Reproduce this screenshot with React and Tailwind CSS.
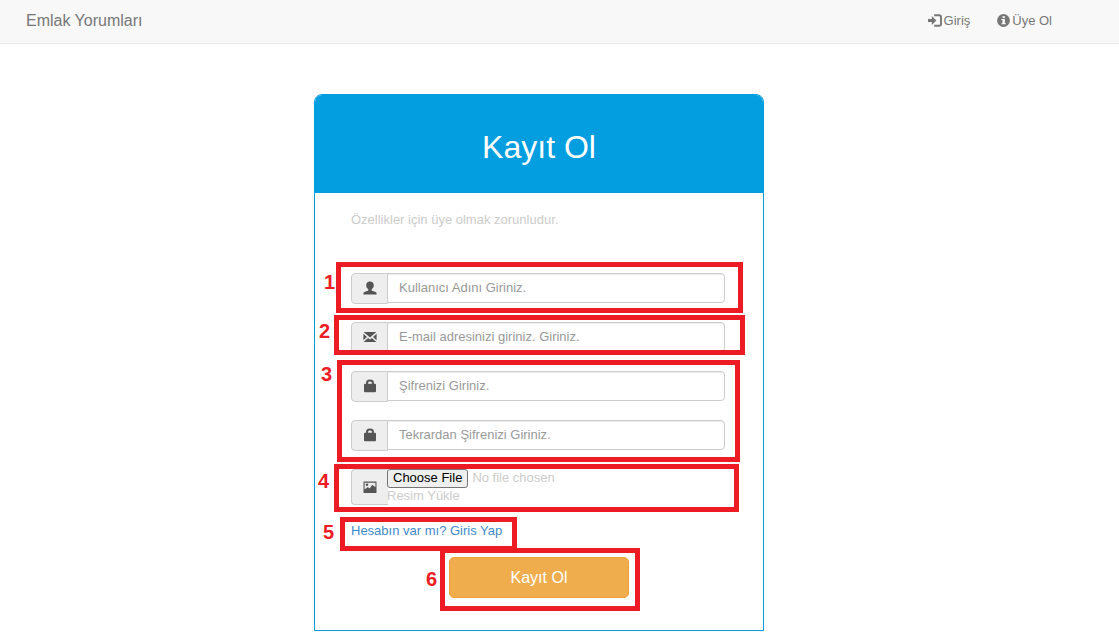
import React from "react";

function LoginIcon() {
  return (
    <svg viewBox="0 0 14 13" className="h-[13px] w-3.5 shrink-0" aria-hidden="true">
      <path d="M0 4.9H3.8V2L8.4 6.5L3.8 11V8.1H0Z" fill="currentColor" />
      <path d="M6.2 1.2H11C12.4 1.2 13 1.8 13 3V10C13 11.2 12.4 11.8 11 11.8H6.2" fill="none" stroke="currentColor" strokeWidth="1.9" />
    </svg>
  );
}

function InfoIcon() {
  return (
    <svg viewBox="0 0 13 13" className="h-[13px] w-[13px] shrink-0" aria-hidden="true">
      <circle cx="6.5" cy="6.5" r="6.4" fill="currentColor" />
      <path d="M5.5 2.2H7.9V4H5.5ZM4.4 5H7.9V9.2H8.8V10.3H4.4V9.2H5.4V6.1H4.4Z" fill="#f8f8f8" />
    </svg>
  );
}

function UserIcon() {
  return (
    <svg viewBox="0 0 14 14" className="h-3.5 w-3.5" fill="currentColor" aria-hidden="true">
      <path d="M7 .4C9.4 .4 10.8 2 10.8 4.2C10.8 6 9.8 7.4 8.7 8.3V9.2C8.7 9.7 9.3 9.9 10.6 10.3C12.8 11 13.6 11.6 13.6 12.6V13.4H.4V12.6C.4 11.6 1.2 11 3.4 10.3C4.7 9.9 5.3 9.7 5.3 9.2V8.3C4.2 7.4 3.2 6 3.2 4.2C3.2 2 4.6 .4 7 .4Z" />
    </svg>
  );
}

function MailIcon() {
  return (
    <svg viewBox="0 0 14 14" className="h-3.5 w-3.5" fill="currentColor" aria-hidden="true">
      <path d="M.6 2H13.4L7 7.6ZM.4 3.7L4 6.9L.4 10.2ZM13.6 3.7V10.2L10 6.9ZM5.1 7.9L7 9.6L8.9 7.9L13.4 12H.6Z" />
    </svg>
  );
}

function LockIcon() {
  return (
    <svg viewBox="0 0 14 14" className="h-3.5 w-3.5" aria-hidden="true">
      <path d="M4.1 6V3.8C4.1 2.3 5 1.6 7 1.6S9.9 2.3 9.9 3.8V6" fill="none" stroke="currentColor" strokeWidth="2" />
      <rect x="1" y="4.7" width="12" height="8.6" rx="1" fill="currentColor" />
    </svg>
  );
}

function PictureIcon() {
  return (
    <svg viewBox="0 0 14 14" className="h-3.5 w-3.5" aria-hidden="true">
      <rect x=".5" y="1.5" width="13" height="11.5" rx=".5" fill="currentColor" />
      <path d="M1.6 2.7H12.4V7.2L9.4 4.8L6.6 8.6L4.8 7L1.6 9.6Z" fill="#eee" />
      <circle cx="4" cy="4.8" r="1.3" fill="currentColor" />
    </svg>
  );
}

const addon =
  "flex w-[37px] shrink-0 items-center justify-center rounded-l border border-[#ccc] bg-[#eee] text-[#555]";

function Field({ id, label, type, icon }) {
  return (
    <div className="flex items-start">
      <label htmlFor={id} aria-label={label} className={`${addon} h-[31px] pb-0.5`}>
        {icon}
      </label>
      <input
        id={id}
        type={type}
        placeholder={label}
        className="-ml-px h-[30px] min-w-0 flex-1 rounded-r border border-[#ccc] bg-white px-[11px] pb-0.5 text-[13px] text-[#555] shadow-[inset_0_1px_1px_rgba(0,0,0,0.075)] outline-none placeholder:text-[#999]"
      />
    </div>
  );
}

function Marker({ number, numberPlace, framePlace }) {
  return (
    <>
      <span className={`pointer-events-none absolute text-xl leading-5 font-bold text-[#ed1c24] ${numberPlace}`}>
        {number}
      </span>
      <div className={`pointer-events-none absolute border-[5px] border-[#ed1c24] ${framePlace}`} />
    </>
  );
}

export default function App() {
  return (
    <div className="font-['Liberation_Sans',Arial,sans-serif] text-[13px] leading-[18px]">
      <nav className="flex h-11 items-center justify-between border-b border-[#e7e7e7] bg-[#f8f8f8] pr-[67px] pb-0.5 pl-[26px] text-[#777]">
        <a href="#" className="text-base leading-5">Emlak Yorumları</a>
        <div className="flex gap-[27px]">
          <a href="#giris" className="flex items-center gap-0.5">
            <LoginIcon />
            Giriş
          </a>
          <a href="#uye-ol" className="flex items-center gap-0.5">
            <InfoIcon />
            Üye Ol
          </a>
        </div>
      </nav>

      <main className="flex justify-center pt-[50px] pr-[41px] pb-[9px]">
        <div className="relative w-full max-w-[450px] rounded-t-lg border border-[#029ee0]">
          <h1 className="rounded-t-[7px] bg-[#029ee0] pt-8 pb-[26px] text-center text-[32px] leading-10 text-white">
            Kayıt Ol
          </h1>
          <form className="px-9 pt-[18px] pr-[38px] pb-8" onSubmit={(e) => e.preventDefault()}>
            <p className="mb-11 text-[#ccc]">Özellikler için üye olmak zorunludur.</p>
            <div className="flex flex-col gap-[18px]">
              <Field id="user" label="Kullanıcı Adını Giriniz." type="text" icon={<UserIcon />} />
              <Field id="email" label="E-mail adresinizi giriniz. Giriniz." type="email" icon={<MailIcon />} />
              <Field id="password" label="Şifrenizi Giriniz." type="password" icon={<LockIcon />} />
              <Field id="password-again" label="Tekrardan Şifrenizi Giriniz." type="password" icon={<LockIcon />} />
              <div className="flex">
                <span className={`${addon} h-9 border-r-0`}>
                  <PictureIcon />
                </span>
                <div className="-ml-px flex min-w-0 flex-1 flex-col text-[#ccc]">
                  <input
                    id="picture"
                    type="file"
                    className="h-[19px] w-full text-[13px] leading-[17px] file:mr-1 file:h-[19px] file:rounded-[3px] file:border file:border-solid file:border-[#767676] file:bg-[#efefef] file:px-[5px] file:pb-0.5 file:text-[13px] file:leading-[15px] file:text-black"
                  />
                  <label htmlFor="picture" className="leading-4">Resim Yükle</label>
                </div>
              </div>
            </div>
            <a href="#giris" className="mt-[17px] block text-[#428bca]">Hesabın var mı? Giris Yap</a>
            <div className="mt-[17px] flex justify-center pl-0.5">
              <button
                type="submit"
                className="h-[41px] w-[180px] rounded-[5px] border border-[#eea236] bg-[#f0ad4e] text-base text-white"
              >
                Kayıt Ol
              </button>
            </div>
          </form>

          <Marker number="1" numberPlace="left-[9px] top-[177px]" framePlace="left-[21px] top-[167px] h-[51px] w-[407px]" />
          <Marker number="2" numberPlace="left-[4px] top-[226px]" framePlace="left-[19px] top-[220px] h-[40px] w-[411px]" />
          <Marker number="3" numberPlace="left-[6px] top-[269px]" framePlace="left-[22px] top-[265px] h-[102px] w-[403px]" />
          <Marker number="4" numberPlace="left-[3px] top-[376px]" framePlace="left-[19px] top-[369px] h-[48px] w-[405px]" />
          <Marker number="5" numberPlace="left-[8px] top-[427px]" framePlace="left-[25px] top-[422px] h-[34px] w-[177px]" />
          <Marker number="6" numberPlace="left-[111px] top-[474px]" framePlace="left-[125px] top-[453px] h-[63px] w-[200px]" />
        </div>
      </main>
    </div>
  );
}
